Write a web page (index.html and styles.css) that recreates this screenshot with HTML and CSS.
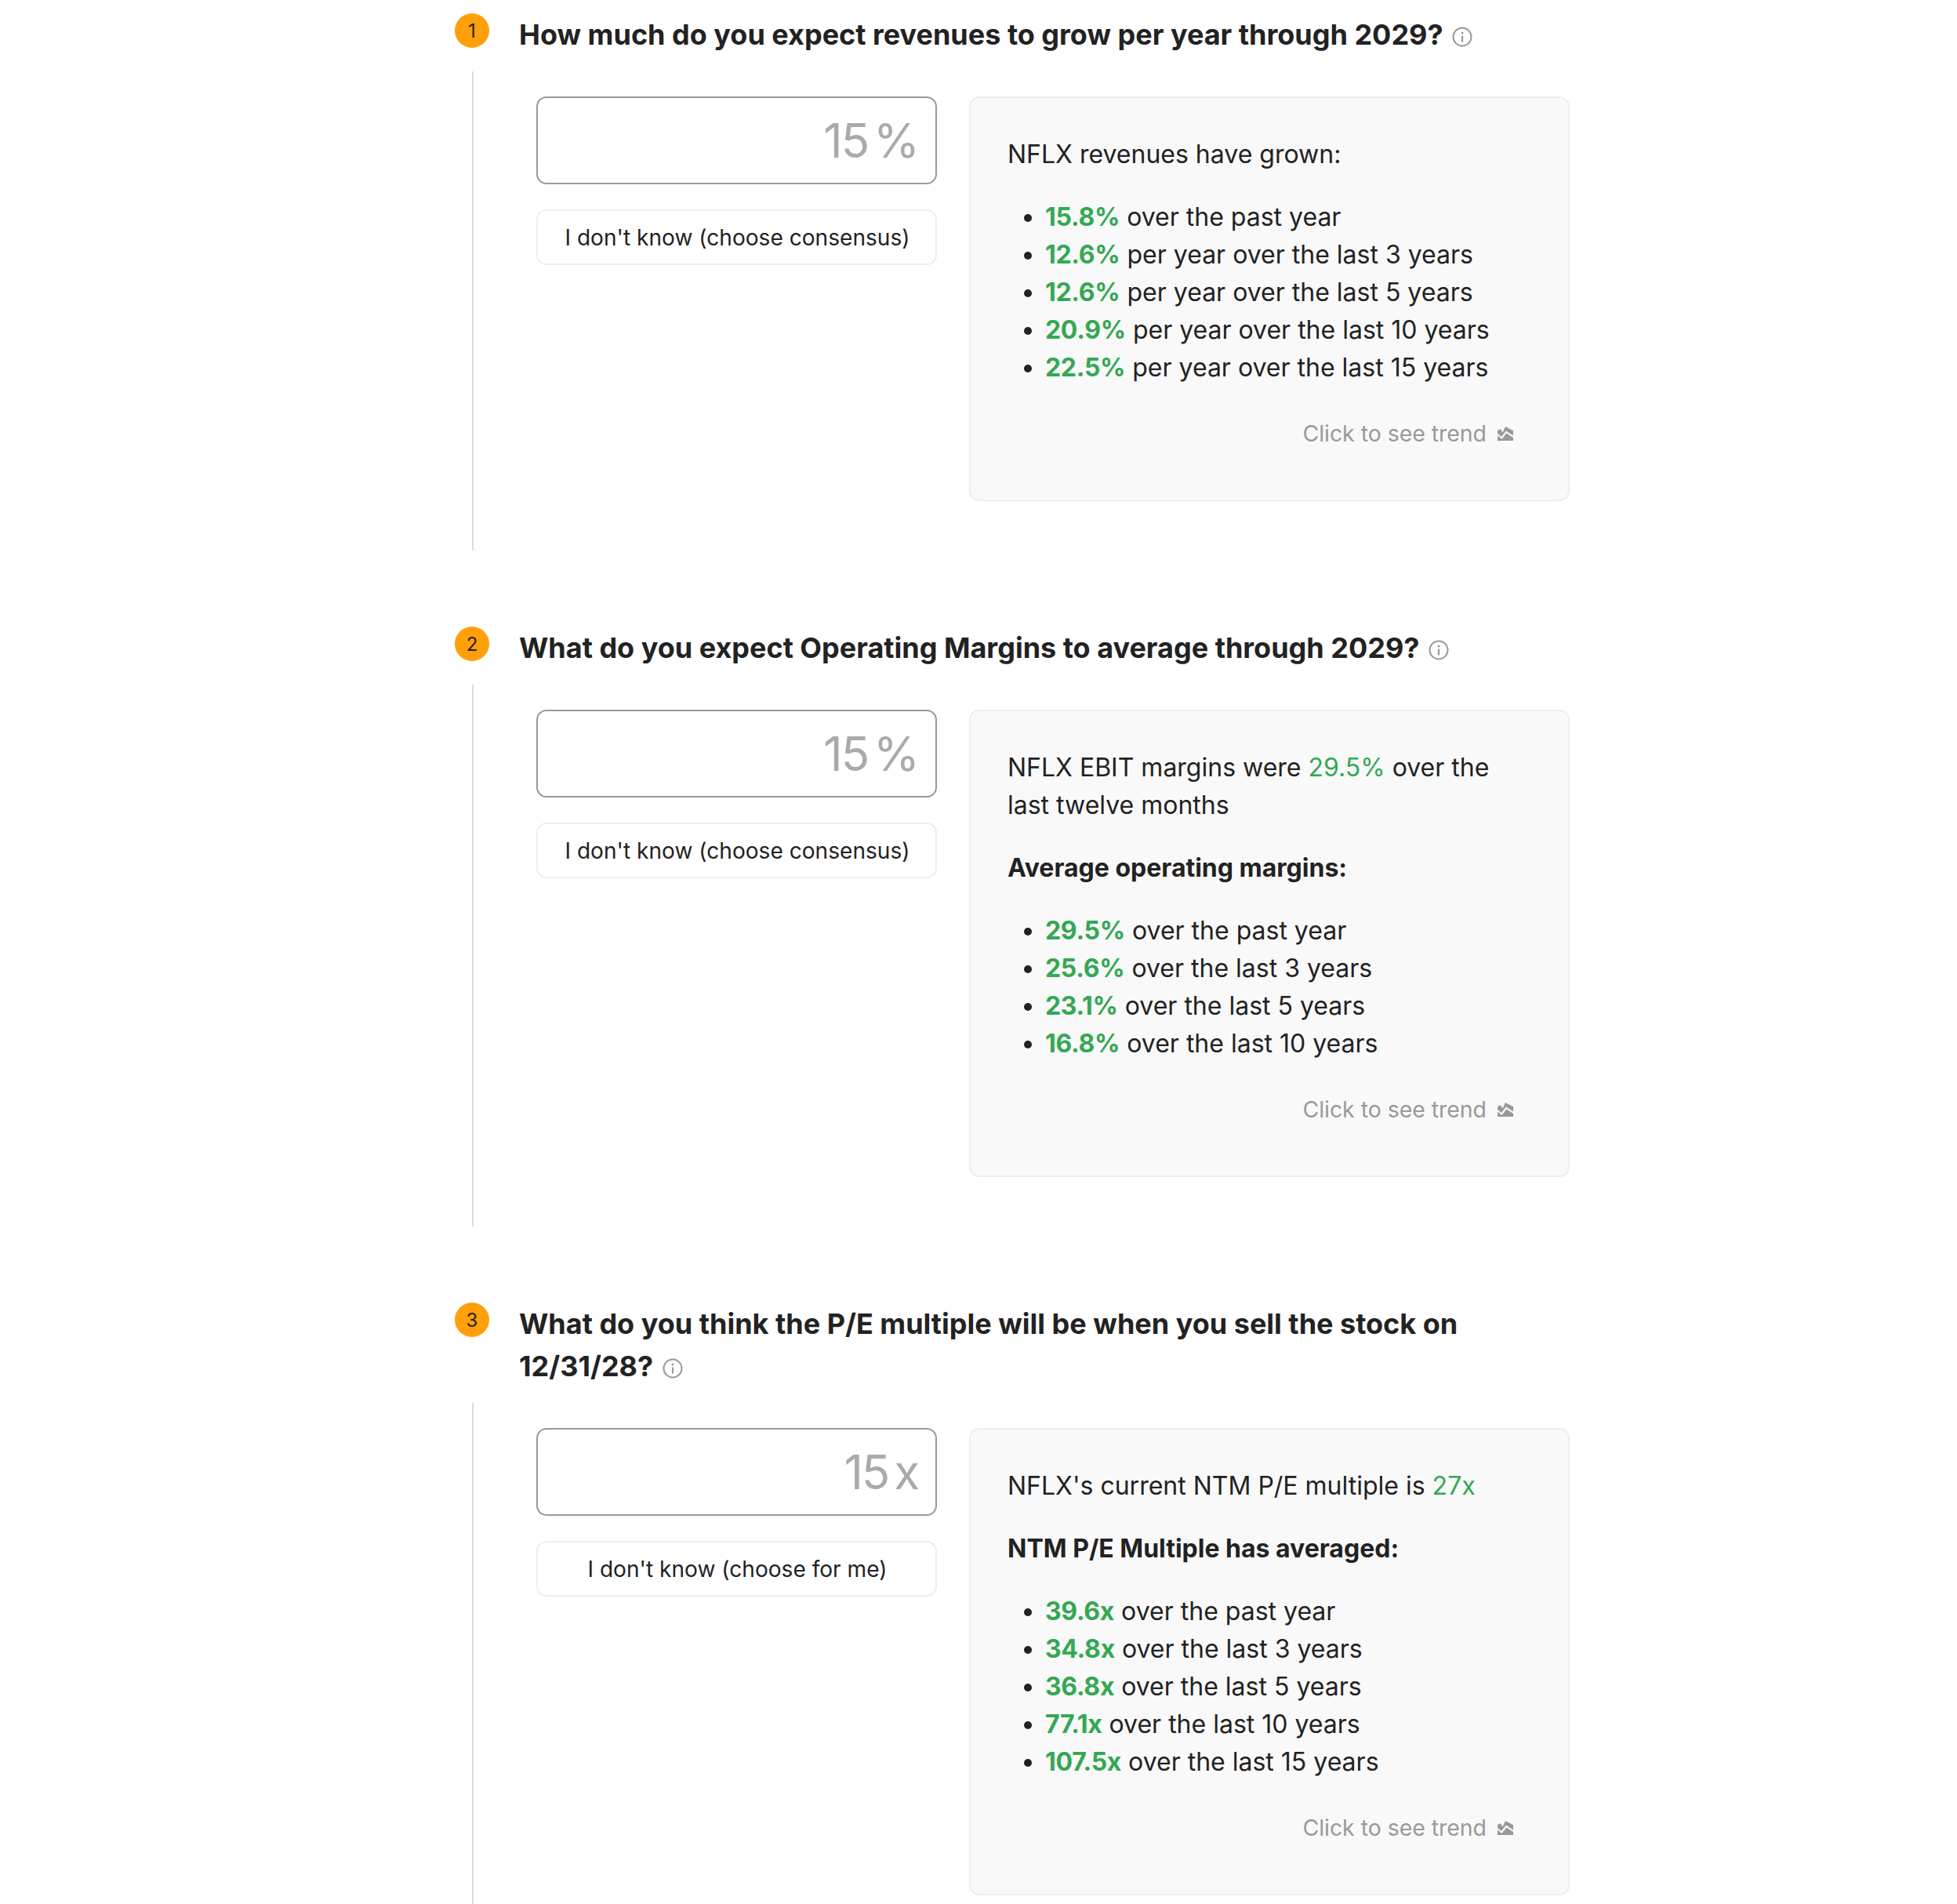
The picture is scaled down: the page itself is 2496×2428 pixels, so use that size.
FILE: index.html
```html
<!DOCTYPE html>
<html lang="en">
<head>
    <meta charset="UTF-8">
    <title>Valuation Questions</title>
    <link rel="stylesheet" href="styles.css">
</head>
<body>
    <svg class="icon-defs" width="0" height="0">
        <symbol id="info" viewBox="0 0 26 26">
            <circle cx="13" cy="13" r="11.5" fill="none" stroke="currentColor" stroke-width="2"/>
            <circle cx="13" cy="8" r="1.5" fill="currentColor"/>
            <rect x="11.9" y="11.5" width="2.2" height="8" fill="currentColor"/>
        </symbol>
        <symbol id="trend" viewBox="0 0 20 18">
            <path d="M0 5.300 L3.500 3 L6.500 7.500 L10 0 L20 5.300 V11.500 L10.800 5.500 L5 13 L0 9 Z" fill="currentColor"/>
            <path d="M0 11.500 L5.500 16 L11.300 8.500 L20 14 V18 H0 Z" fill="currentColor"/>
        </symbol>
    </svg>

    <div class="page">
        <section class="question">
            <div class="question-head">
                <span class="badge">1</span>
                <h2>How much do you expect revenues to grow per year through 2029? <svg class="info"><use href="#info"/></svg></h2>
            </div>
            <div class="question-body">
                <div class="answer">
                    <div class="answer-input">15 <span>%</span></div>
                    <button class="skip">I don't know (choose consensus)</button>
                </div>
                <div class="card">
                    <p>NFLX revenues have grown:</p>
                    <ul>
                        <li><b>15.8%</b> over the past year</li>
                        <li><b>12.6%</b> per year over the last 3 years</li>
                        <li><b>12.6%</b> per year over the last 5 years</li>
                        <li><b>20.9%</b> per year over the last 10 years</li>
                        <li><b>22.5%</b> per year over the last 15 years</li>
                    </ul>
                    <div class="trend">Click to see trend <svg><use href="#trend"/></svg></div>
                </div>
            </div>
        </section>

        <section class="question">
            <div class="question-head">
                <span class="badge">2</span>
                <h2>What do you expect Operating Margins to average through 2029? <svg class="info"><use href="#info"/></svg></h2>
            </div>
            <div class="question-body">
                <div class="answer">
                    <div class="answer-input">15 <span>%</span></div>
                    <button class="skip">I don't know (choose consensus)</button>
                </div>
                <div class="card">
                    <p>NFLX EBIT margins were <span class="green">29.5%</span> over the last twelve months</p>
                    <p class="card-label">Average operating margins:</p>
                    <ul>
                        <li><b>29.5%</b> over the past year</li>
                        <li><b>25.6%</b> over the last 3 years</li>
                        <li><b>23.1%</b> over the last 5 years</li>
                        <li><b>16.8%</b> over the last 10 years</li>
                    </ul>
                    <div class="trend">Click to see trend <svg><use href="#trend"/></svg></div>
                </div>
            </div>
        </section>

        <section class="question">
            <div class="question-head">
                <span class="badge">3</span>
                <h2>What do you think the P/E multiple will be when you sell the stock on 12/31/28? <svg class="info"><use href="#info"/></svg></h2>
            </div>
            <div class="question-body">
                <div class="answer">
                    <div class="answer-input">15 <span>x</span></div>
                    <button class="skip">I don't know (choose for me)</button>
                </div>
                <div class="card">
                    <p>NFLX's current NTM P/E multiple is <span class="green">27x</span></p>
                    <p class="card-label">NTM P/E Multiple has averaged:</p>
                    <ul>
                        <li><b>39.6x</b> over the past year</li>
                        <li><b>34.8x</b> over the last 3 years</li>
                        <li><b>36.8x</b> over the last 5 years</li>
                        <li><b>77.1x</b> over the last 10 years</li>
                        <li><b>107.5x</b> over the last 15 years</li>
                    </ul>
                    <div class="trend">Click to see trend <svg><use href="#trend"/></svg></div>
                </div>
            </div>
        </section>
    </div>
</body>
</html>
```

FILE: styles.css
```css
html, body {
    margin: 0;
    height: 2428px;
    overflow: hidden;
    background-color: #fff;
}
body {
    font-family: Inter, "Liberation Sans", sans-serif;
    font-size: 32px;
    line-height: 48px;
    color: #222;
}
.icon-defs {
    position: absolute;
}
.page {
    width: 1422px;
    margin-left: 580px;
    padding-top: 17px;
}
.question {
    margin-bottom: 97px;
}
.question-head {
    display: flex;
    gap: 38px;
}
.badge {
    flex: none;
    width: 44px;
    height: 44px;
    border-radius: 50%;
    background-color: #ff9f0a;
    font-size: 24px;
    line-height: 46px;
    text-align: center;
}
h2 {
    margin: 0;
    font-size: 36px;
    line-height: 54px;
    font-weight: 700;
}
.info {
    width: 26px;
    height: 26px;
    margin-left: 3px;
    vertical-align: -3px;
    color: #999;
}
.question-body {
    display: flex;
    gap: 41px;
    margin-left: 22px;
    margin-top: 20px;
    padding: 32px 0 63px 80px;
    border-left: 2px solid #ddd;
}
.answer {
    flex: none;
    width: 511px;
}
.answer-input {
    box-sizing: border-box;
    height: 112px;
    padding-right: 22px;
    border: 2px solid #999;
    border-radius: 13px;
    font-size: 60px;
    line-height: 108px;
    font-weight: 400;
    letter-spacing: -2px;
    color: #aaa;
    text-align: right;
    word-spacing: -8px;
}
.skip {
    display: block;
    box-sizing: border-box;
    width: 100%;
    height: 71px;
    margin-top: 32px;
    padding: 0 0 0 2px;
    background-color: #fff;
    border: 2px solid #eee;
    border-radius: 13px;
    font-family: inherit;
    font-size: 28.1px;
    color: #222;
}
.card {
    box-sizing: border-box;
    width: 766px;
    padding: 48px 47px 60px;
    background-color: #f9f9f9;
    border: 2px solid #eee;
    border-radius: 13px;
}
.card p {
    margin: 0 0 32px;
}
.card-label {
    font-weight: 700;
}
.card ul {
    margin: 0;
    padding-left: 48px;
}
.card b {
    font-weight: 700;
    letter-spacing: -0.3px;
    color: #34a853;
}
.green {
    color: #34a853;
}
.trend {
    display: flex;
    justify-content: flex-end;
    align-items: center;
    gap: 14px;
    margin-top: 36px;
    padding-right: 23px;
    font-size: 28.4px;
    color: #999;
}
.trend svg {
    width: 20px;
    height: 18px;
}
```
